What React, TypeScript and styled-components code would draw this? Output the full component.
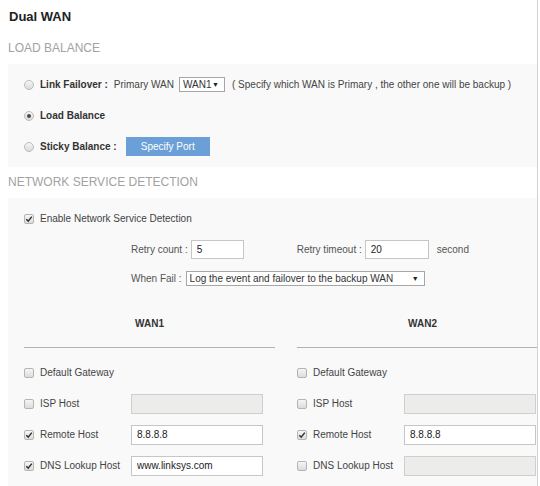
import React from "react";
import styled, { createGlobalStyle } from "styled-components";

const GlobalStyle = createGlobalStyle`
  html, body {
    margin: 0;
    padding: 0;
    background: #ffffff;
  }
  body {
    font-family: "Liberation Sans", Arial, sans-serif;
    font-size: 10px;
    color: #444;
  }
`;

const Frame = styled.div`
  width: 538px;
  min-height: 486px;
  box-sizing: border-box;
  padding-left: 8px;
  border-right: 1px solid #d2d2d2;
  overflow: hidden;
  background: #fff;
`;

const Title = styled.h1`
  margin: 0;
  padding-left: 1px;
  font-size: 13px;
  line-height: 33px;
  font-weight: bold;
  color: #222;
`;

const SectionHeading = styled.h2`
  margin: 0;
  font-size: 12px;
  line-height: 31px;
  font-weight: normal;
  color: #a2a2a2;
  text-transform: uppercase;
`;

const Panel = styled.div<{ $grow?: boolean }>`
  background: #f9f9f9;
  padding: 5px 0;
  min-height: ${(p) => (p.$grow ? "300px" : "auto")};
`;

const OptionRow = styled.div<{ $indent?: number; $height?: number }>`
  display: flex;
  align-items: center;
  height: ${(p) => p.$height ?? 31}px;
  padding-left: ${(p) => p.$indent ?? 16}px;
  white-space: nowrap;
`;

const Radio = styled.span<{ $checked?: boolean }>`
  position: relative;
  flex-shrink: 0;
  width: 8px;
  height: 8px;
  border-radius: 50%;
  border: 1px solid #bcbcbc;
  background: linear-gradient(#f6f6f6, #dadada);
  margin-right: 6px;

  &::after {
    content: "";
    display: ${(p) => (p.$checked ? "block" : "none")};
    position: absolute;
    left: 2px;
    top: 2px;
    width: 4px;
    height: 4px;
    border-radius: 50%;
    background: #4a4a4a;
  }
`;

const Box = styled.span`
  display: flex;
  align-items: center;
  justify-content: center;
  flex-shrink: 0;
  width: 8px;
  height: 8px;
  border-radius: 2px;
  border: 1px solid #b4b4b4;
  background: linear-gradient(#f6f6f6, #dcdcdc);
  margin-right: 6px;
`;

const Strong = styled.span<{ $gap?: number }>`
  font-weight: bold;
  color: #333;
  margin-right: ${(p) => p.$gap ?? 0}px;
`;

const Plain = styled.span<{ $gap?: number; $color?: string }>`
  color: ${(p) => p.$color ?? "#444"};
  margin-right: ${(p) => p.$gap ?? 0}px;
`;

const SelectWrap = styled.span<{ $width: number; $gap?: number }>`
  position: relative;
  display: inline-block;
  flex-shrink: 0;
  width: ${(p) => p.$width}px;
  height: 15px;
  box-sizing: border-box;
  border: 1px solid #a6a6a6;
  background: #fff;
  margin-right: ${(p) => p.$gap ?? 0}px;
`;

const NativeSelect = styled.select`
  appearance: none;
  -webkit-appearance: none;
  display: block;
  width: 100%;
  height: 13px;
  border: none;
  outline: none;
  background: transparent;
  padding: 0 0 0 3px;
  margin: 0;
  font-family: "Liberation Sans", Arial, sans-serif;
  font-size: 10px;
  line-height: 13px;
  color: #333;
`;

const Arrow = styled.span`
  position: absolute;
  right: 5px;
  top: 0;
  line-height: 13px;
  font-size: 7px;
  color: #222;
  pointer-events: none;
`;

const PortButton = styled.button`
  width: 84px;
  height: 19px;
  margin-left: 9px;
  border: none;
  background: #6a9fd7;
  color: #fff;
  font-family: "Liberation Sans", Arial, sans-serif;
  font-size: 10px;
  padding: 0;
`;

const TextBox = styled.input<{ $width: number; $height?: number; $gap?: number }>`
  width: ${(p) => p.$width}px;
  height: ${(p) => p.$height ?? 20}px;
  box-sizing: border-box;
  flex-shrink: 0;
  border: 1px solid #c6c6c6;
  background: #fff;
  padding: 0 5px;
  margin: 0 ${(p) => p.$gap ?? 0}px 0 0;
  font-family: "Liberation Sans", Arial, sans-serif;
  font-size: 10px;
  color: #222;
  outline: none;

  &:disabled {
    background: #ececea;
    border-color: #cfcfcf;
  }
`;

const WanGrid = styled.div`
  display: grid;
  grid-template-columns: 251px 251px;
  column-gap: 22px;
  margin-left: 16px;
`;

const WanColumn = styled.div`
  display: flex;
  flex-direction: column;
`;

const WanHeader = styled.div`
  padding: 25px 0 16px;
  line-height: 14px;
  text-align: center;
  font-weight: bold;
  color: #333;
  border-bottom: 1px solid #b2b2b2;
  margin-bottom: 9px;
`;

const HostRow = styled.div`
  display: flex;
  align-items: center;
  height: 31px;
  white-space: nowrap;
`;

const HostLabel = styled.span`
  width: 91px;
  flex-shrink: 0;
  color: #444;
`;

const Tick = () => (
  <svg width="8" height="8" viewBox="0 0 8 8">
    <path d="M1.3 4.2 L3.2 6.1 L6.8 1.6" fill="none" stroke="#333" strokeWidth="1.5" />
  </svg>
);

const Checkbox = ({ checked }: { checked?: boolean }) => <Box>{checked && <Tick />}</Box>;

type Host = { label: string; checked: boolean; value?: string };

const wan1: Host[] = [
  { label: "Default Gateway", checked: false },
  { label: "ISP Host", checked: false, value: "" },
  { label: "Remote Host", checked: true, value: "8.8.8.8" },
  { label: "DNS Lookup Host", checked: true, value: "www.linksys.com" },
];

const wan2: Host[] = [
  { label: "Default Gateway", checked: false },
  { label: "ISP Host", checked: false, value: "" },
  { label: "Remote Host", checked: true, value: "8.8.8.8" },
  { label: "DNS Lookup Host", checked: false, value: "" },
];

function WanSection({ name, hosts }: { name: string; hosts: Host[] }) {
  return (
    <WanColumn>
      <WanHeader>{name}</WanHeader>
      {hosts.map((h) => (
        <HostRow key={h.label}>
          <Checkbox checked={h.checked} />
          <HostLabel>{h.label}</HostLabel>
          {h.value !== undefined && (
            <TextBox $width={132} defaultValue={h.value} disabled={!h.checked} />
          )}
        </HostRow>
      ))}
    </WanColumn>
  );
}

export default function App() {
  return (
    <>
      <GlobalStyle />
      <Frame>
        <Title>Dual WAN</Title>
        <SectionHeading>Load Balance</SectionHeading>
        <Panel>
          <OptionRow>
            <Radio />
            <Strong $gap={6}>Link Failover :</Strong>
            <Plain $gap={5}>Primary WAN</Plain>
            <SelectWrap $width={46} $gap={7}>
              <NativeSelect defaultValue="WAN1">
                <option>WAN1</option>
                <option>WAN2</option>
              </NativeSelect>
              <Arrow>▼</Arrow>
            </SelectWrap>
            <Plain>( Specify which WAN is Primary , the other one will be backup )</Plain>
          </OptionRow>
          <OptionRow>
            <Radio $checked />
            <Strong>Load Balance</Strong>
          </OptionRow>
          <OptionRow>
            <Radio />
            <Strong>Sticky Balance :</Strong>
            <PortButton>Specify Port</PortButton>
          </OptionRow>
        </Panel>
        <SectionHeading>Network Service Detection</SectionHeading>
        <Panel $grow>
          <OptionRow>
            <Checkbox checked />
            <Plain>Enable Network Service Detection</Plain>
          </OptionRow>
          <OptionRow $indent={123}>
            <Plain $gap={3} $color="#555">Retry count :</Plain>
            <TextBox $width={53} $height={19} $gap={53} defaultValue="5" />
            <Plain $gap={3} $color="#555">Retry timeout :</Plain>
            <TextBox $width={64} $height={19} $gap={8} defaultValue="20" />
            <Plain $color="#555">second</Plain>
          </OptionRow>
          <OptionRow $indent={123} $height={27}>
            <Plain $gap={4} $color="#555">When Fail :</Plain>
            <SelectWrap $width={239}>
              <NativeSelect defaultValue="log">
                <option value="log">Log the event and failover to the backup WAN</option>
                <option value="only">Log the event only</option>
              </NativeSelect>
              <Arrow>▼</Arrow>
            </SelectWrap>
          </OptionRow>
          <WanGrid>
            <WanSection name="WAN1" hosts={wan1} />
            <WanSection name="WAN2" hosts={wan2} />
          </WanGrid>
        </Panel>
      </Frame>
    </>
  );
}
